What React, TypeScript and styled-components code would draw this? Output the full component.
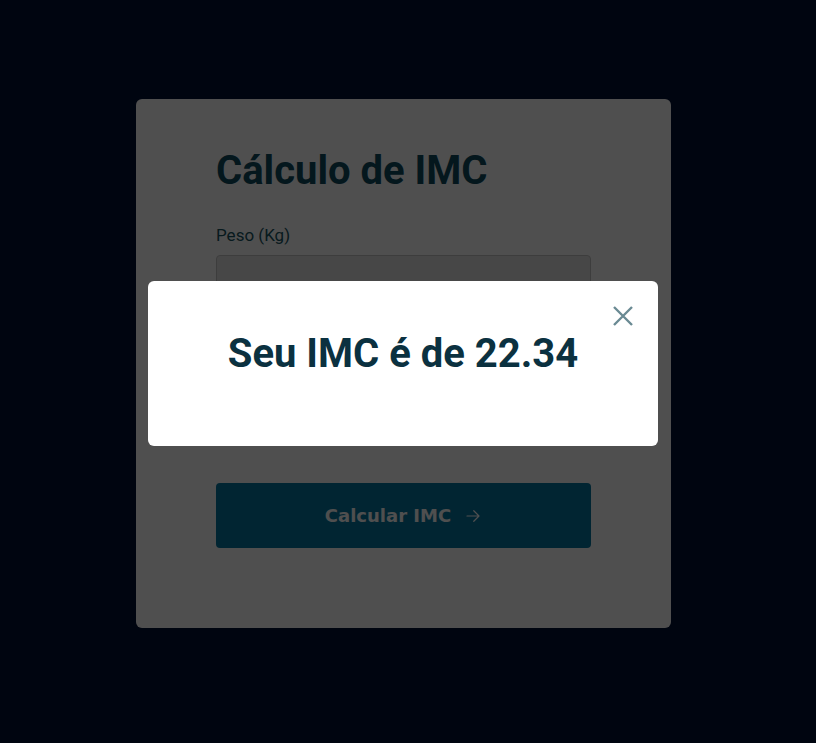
import React, {useState} from 'react';
import styled, {createGlobalStyle} from 'styled-components';

// ── Global ─────────────────────────────────────────────────────────

const GlobalStyle = createGlobalStyle`
  * {
    box-sizing: border-box;
  }

  body {
    margin: 0;
    background: #031034;
    font-family: Roboto, 'Liberation Sans', sans-serif;
  }
`;

// ── Page / form card ───────────────────────────────────────────────

const Page = styled.main`
  min-height: 100vh;
  display: flex;
  align-items: center;
  justify-content: center;
  padding: 0 9px 16px 0;
`;

const Card = styled.form`
  width: 535px;
  height: 529px;
  display: flex;
  flex-direction: column;
  padding: 48px 80px 80px;
  background: #ffffff;
  border-radius: 6px;
`;

const Title = styled.h1`
  margin: 0 0 31px;
  font-size: 40px;
  font-weight: 700;
  line-height: 47px;
  color: #0f4b5e;
`;

const Field = styled.div`
  display: flex;
  flex-direction: column;
  gap: 10px;
`;

const Label = styled.label`
  font-size: 17px;
  line-height: 20px;
  color: #185462;
`;

const Input = styled.input`
  height: 48px;
  padding: 0 14px;
  border: 1px solid #c4c4c4;
  border-radius: 4px;
  background: #e6e6e6;
  font-family: inherit;
  font-size: 16px;
  outline: none;
`;

const SubmitButton = styled.button`
  margin-top: auto;
  height: 65px;
  display: flex;
  align-items: center;
  justify-content: center;
  gap: 13px;
  border: none;
  border-radius: 4px;
  background: #0677a1;
  color: #ffffff;
  font-family: 'DejaVu Sans', Verdana, sans-serif;
  font-size: 18px;
  font-weight: 700;
  cursor: pointer;
`;

// ── Modal ──────────────────────────────────────────────────────────

const Overlay = styled.div`
  position: fixed;
  inset: 0;
  display: flex;
  align-items: center;
  justify-content: center;
  padding: 0 10px 16px 0;
  background: rgba(0, 0, 0, 0.69);
`;

const Modal = styled.div`
  position: relative;
  width: 510px;
  height: 165px;
  padding: 49px 24px 0;
  background: #ffffff;
  border-radius: 6px;
  text-align: center;
`;

const Result = styled.h2`
  margin: 0;
  font-size: 40px;
  font-weight: 700;
  line-height: 47px;
  color: #0b3140;
`;

const CloseButton = styled.button`
  position: absolute;
  top: 21px;
  right: 21px;
  width: 28px;
  height: 28px;
  display: flex;
  align-items: center;
  justify-content: center;
  padding: 0;
  border: none;
  background: transparent;
  cursor: pointer;
`;

const CloseIcon = () => (
  <svg width="20" height="20" viewBox="0 0 20 20" fill="none">
    <path
      d="M1 1L19 19M19 1L1 19"
      stroke="#6a8a93"
      strokeWidth="2.4"
      strokeLinecap="butt"
    />
  </svg>
);

const ArrowIcon = () => (
  <svg width="18" height="18" viewBox="0 0 24 24" fill="none">
    <path
      d="M4 12h16M13 5l7 7-7 7"
      stroke="currentColor"
      strokeWidth="1.6"
      strokeLinecap="round"
      strokeLinejoin="round"
    />
  </svg>
);

// ── App ────────────────────────────────────────────────────────────

export default function App() {
  const [isOpen, setIsOpen] = useState(true);

  return (
    <>
      <GlobalStyle />
      <Page>
        <Card onSubmit={(e) => e.preventDefault()}>
          <Title>Cálculo de IMC</Title>
          <Field>
            <Label htmlFor="peso">Peso (Kg)</Label>
            <Input id="peso" type="number" defaultValue="" />
          </Field>
          <SubmitButton type="submit" onClick={() => setIsOpen(true)}>
            Calcular IMC <ArrowIcon />
          </SubmitButton>
        </Card>
      </Page>

      {isOpen && (
        <Overlay>
          <Modal>
            <CloseButton aria-label="Fechar" onClick={() => setIsOpen(false)}>
              <CloseIcon />
            </CloseButton>
            <Result>Seu IMC é de 22.34</Result>
          </Modal>
        </Overlay>
      )}
    </>
  );
}
